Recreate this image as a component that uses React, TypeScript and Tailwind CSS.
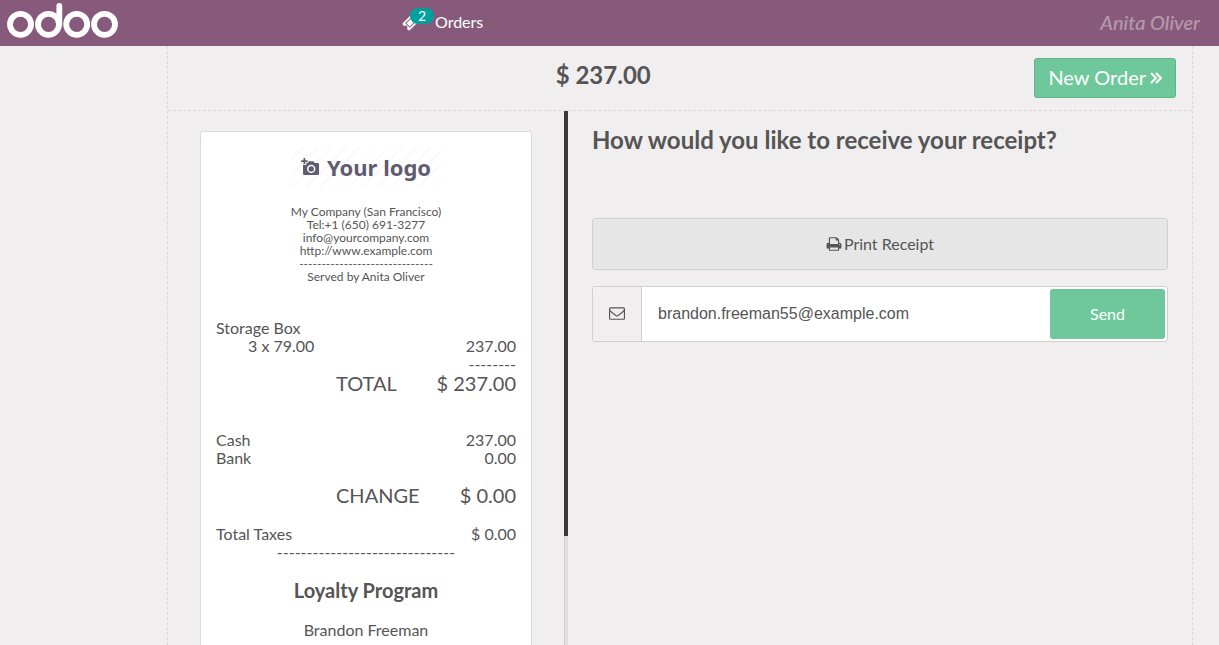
import { useState } from 'react'

interface ReceiptLine {
  label: string
  amount: string
}

const companyLines = [
  'My Company (San Francisco)',
  'Tel:+1 (650) 691-3277',
  'info@yourcompany.com',
  'http://www.example.com',
  '------------------------------',
  'Served by Anita Oliver',
]

const payments: ReceiptLine[] = [
  { label: 'Cash', amount: '237.00' },
  { label: 'Bank', amount: '0.00' },
]

const icons = {
  ticket:
    'M1024 452l316 316-572 572-316-316zm-211 979l618-618q19-19 19-45t-19-45l-362-362q-18-18-45-18t-45 18l-618 618q-19 19-19 45t19 45l362 362q18 18 45 18t45-18zm889-637l-907 908q-37 37-90.500 37t-90.500-37l-126-126q56-56 56-136t-56-136-136-56-136 56l-125-126q-37-37-37-90.500t37-90.500l907-906q37-37 90.500-37t90.500 37l125 125q-56 56-56 136t56 136 136 56 136-56l126 125q37 37 37 90.500t-37 90.500z',
  print:
    'M448 1536h896v-256h-896v256zm0-640h896v-384h-160q-40 0-68-28t-28-68v-160h-640v640zm1152 64q0-26-19-45t-45-19-45 19-19 45 19 45 45 19 45-19 19-45zm128 0v416q0 13-9.500 22.500t-22.500 9.500h-224v160q0 40-28 68t-68 28h-960q-40 0-68-28t-28-68v-160h-224q-13 0-22.500-9.500t-9.500-22.500v-416q0-79 56.500-135.500t135.500-56.500h64v-544q0-40 28-68t68-28h672q40 0 88 20t76 48l152 152q28 28 48 76t20 88v256h64q79 0 135.500 56.500t56.500 135.500z',
  envelope:
    'M1664 1504v-768q-32 36-69 66-268 206-426 338-51 43-83 67t-86.500 48.500-102.500 24.500h-2q-48 0-102.500-24.500t-86.500-48.500-83-67q-158-132-426-338-37-30-69-66v768q0 13 9.500 22.500t22.500 9.500h1472q13 0 22.500-9.500t9.500-22.500zm0-1051v-24.500l-.5-13-3-12.500-5.500-9-9-7.500-14-2.500h-1472q-13 0-22.500 9.500t-9.500 22.500q0 168 147 284 193 152 401 317 6 5 35 29.500t46 37.500 44.500 31.500 50.500 27.500 43 9h2q20 0 43-9t50.500-27.500 44.500-31.500 46-37.500 35-29.500q208-165 401-317 54-43 100.500-115.500t46.500-131.500zm128-37v1088q0 66-47 113t-113 47h-1472q-66 0-113-47t-47-113v-1088q0-66 47-113t113-47h1472q66 0 113 47t47 113z',
}

function Icon({ path, className }: { path: string; className: string }) {
  return (
    <svg viewBox="0 0 1792 1792" fill="currentColor" className={className} aria-hidden="true">
      <path d={path} />
    </svg>
  )
}

export default function App() {
  return (
    <div className="flex h-screen flex-col overflow-hidden bg-[#f0eeee] font-['Lato',sans-serif] text-base text-[#555555]">
      <Header />
      <main className="mr-[26px] ml-[167px] flex min-h-0 flex-1 flex-col border-x border-dashed border-[#d9d7d7]">
        {/* Top bar */}
        <div className="flex h-[65px] shrink-0 items-start justify-between border-b border-dashed border-[#d9d7d7] pt-3 pr-4 pl-1">
          <span />
          <h1 className="text-2xl leading-[34px] font-bold">$ 237.00</h1>
          <button
            type="button"
            className="flex h-10 items-center gap-1 rounded-[3px] border border-[#5db68a] bg-[#6ec89b] px-[13px] pb-0.5 text-xl text-white"
          >
            New Order
            <svg viewBox="0 0 12 12" className="mt-0.5 size-3" fill="none" stroke="currentColor" strokeWidth="2" aria-hidden="true">
              <path d="M1 1l5 5-5 5M6 1l5 5-5 5" />
            </svg>
          </button>
        </div>

        <div className="flex min-h-0 flex-1">
          <div className="flex w-[400px] shrink-0">
            <div className="min-w-0 flex-1 overflow-hidden px-8 pt-5">
              <Receipt />
            </div>
            {/* Scroll track */}
            <div className="w-1 border-l border-dotted border-[#c4c4c4] bg-[#dfdfdf]">
              <div className="-ml-px h-[79.5%] w-1 bg-[#393939]" />
            </div>
          </div>
          <ReceiptOptions />
        </div>
      </main>
    </div>
  )
}

function Header() {
  return (
    <header className="flex h-[46px] shrink-0 items-center bg-[#875a7b] pr-[19px] pb-0.5 text-white">
      <div className="w-[402px] pl-[7px]">
        <svg viewBox="0 0 112 38" className="h-[38px] w-28" fill="none" stroke="currentColor" strokeWidth="5.800" role="img" aria-label="odoo">
          <circle cx="13.500" cy="21.300" r="10.500" />
          <circle cx="41.500" cy="21.300" r="10.500" />
          <path d="M52.300 3v18.500" strokeLinecap="round" />
          <circle cx="69.700" cy="21.300" r="10.500" />
          <circle cx="97.500" cy="21.300" r="10.500" />
        </svg>
      </div>
      <button type="button" className="relative flex items-center gap-[15px]">
        <Icon path={icons.ticket} className="size-[18px]" />
        <span className="absolute -top-0.5 left-2 h-4 w-6 rounded-[8px] bg-[#00a09d] text-center text-sm leading-4">
          2
        </span>
        Orders
      </button>
      <span className="ml-auto text-xl font-medium text-white/40 italic">Anita Oliver</span>
    </header>
  )
}

function CompanyLogo() {
  return (
    <div className="mx-auto flex h-10 w-[150px] items-center justify-center gap-2 bg-[repeating-linear-gradient(135deg,#ffffff_0px,#ffffff_8px,#fafafa_8px,#fafafa_10px)] text-[#5f5b70]">
      <svg viewBox="0 0 18 18" className="size-[18px]" fill="currentColor" aria-hidden="true">
        <path d="M2.500 0h1.700v2.300h2.300v1.600h-2.300v2.300h-1.700v-2.300h-2.300v-1.600h2.300z" />
        <path
          fillRule="evenodd"
          d="M7.300 3.300h5.200l1.200 1.600h3.100q1.200 0 1.200 1.200v9.700q0 1.200-1.200 1.200h-13.600q-1.200 0-1.200-1.200v-8.700h3.300v-2.300h2zM10.200 6.700a4.200 4.200 0 100 8.400 4.200 4.200 0 000-8.400zm0 1.500a2.700 2.700 0 110 5.400 2.700 2.700 0 010-5.400z"
        />
        <circle cx="10.200" cy="10.900" r="1.400" />
      </svg>
      <span className="font-['Noto_Sans',sans-serif] text-[22px] leading-6 font-bold">Your logo</span>
    </div>
  )
}

function Receipt() {
  return (
    <section className="flex flex-col gap-[18px] rounded-[3px] border border-[#dadada] bg-white px-[15px] pt-[15px] pb-12 leading-[18px]">
      <CompanyLogo />

      <div className="text-center text-xs leading-[13px]">
        {companyLines.map((line) => (
          <p key={line}>{line}</p>
        ))}
      </div>

      <div className="pt-[18px]">
        <p>Storage Box</p>
        <div className="flex justify-between pl-8">
          <span>3 x 79.00</span>
          <span>237.00</span>
        </div>
        <p className="text-right">--------</p>
        <TotalLine label="TOTAL" amount="$ 237.00" />
      </div>

      <div className="pt-[18px]">
        {payments.map((payment) => (
          <div key={payment.label} className="flex justify-between">
            <span>{payment.label}</span>
            <span>{payment.amount}</span>
          </div>
        ))}
      </div>

      <TotalLine label="CHANGE" amount="$ 0.00" />

      <div>
        <div className="flex justify-between">
          <span>Total Taxes</span>
          <span>$ 0.00</span>
        </div>
        <p className="text-center">------------------------------</p>
      </div>

      <div className="text-center">
        <h3 className="mb-5 text-xl leading-[22px] font-bold">Loyalty Program</h3>
        <p>Brandon Freeman</p>
      </div>
    </section>
  )
}

function TotalLine({ label, amount }: ReceiptLine) {
  return (
    <div className="flex justify-between pb-0.5 pl-[120px] text-xl leading-5">
      <span>{label}</span>
      <span>{amount}</span>
    </div>
  )
}

function ReceiptOptions() {
  const [email, setEmail] = useState('brandon.freeman55@example.com')

  return (
    <section className="min-w-0 flex-1 px-6 pt-3">
      <h2 className="text-2xl leading-[34px] font-bold">How would you like to receive your receipt?</h2>

      <button
        type="button"
        className="mt-[61px] flex h-[52px] w-full items-center justify-center gap-0.5 rounded-[3px] border border-[#cfd0d0] bg-[#e6e6e6]"
      >
        <Icon path={icons.print} className="size-4" />
        Print Receipt
      </button>

      <form className="mt-4 flex h-14 rounded-[3px] border border-[#cfd0d0] bg-white" onSubmit={(e) => e.preventDefault()}>
        <label
          htmlFor="email"
          aria-label="Email"
          className="flex w-[49px] shrink-0 items-center justify-center rounded-l-[2px] border-r border-[#cfd0d0] bg-[#f0eeee] pb-0.5"
        >
          <Icon path={icons.envelope} className="size-4" />
        </label>
        <input
          id="email"
          type="email"
          value={email}
          onChange={(e) => setEmail(e.target.value)}
          className="min-w-0 flex-1 px-4 font-['Liberation_Sans',sans-serif] outline-none"
        />
        <button type="submit" className="m-0.5 w-[115px] rounded-[3px] bg-[#6ec89b] text-white">
          Send
        </button>
      </form>
    </section>
  )
}
